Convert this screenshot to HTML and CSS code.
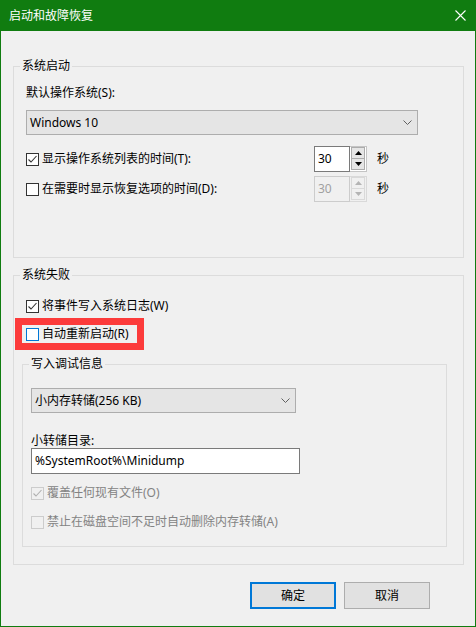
FILE: index.html
```html
<!DOCTYPE html>
<html lang="zh-CN">
<head>
<meta charset="utf-8">
<title>启动和故障恢复</title>
<link rel="stylesheet" href="styles.css">
</head>
<body>
<div class="window">
  <div class="titlebar">
    <span class="title">启动和故障恢复</span>
    <svg class="close" width="11" height="11" viewBox="0 0 11 11"><path d="M0.5 0.5 L10.5 10.5 M10.5 0.5 L0.5 10.5" stroke="#fff" stroke-width="1.1" fill="none"/></svg>
  </div>
  <div class="content">
    <fieldset class="group g1">
      <legend>系统启动</legend>
      <div class="gbody">
        <div class="label">默认操作系统(S):</div>
        <div class="combo w-os">
          <span>Windows 10</span>
          <svg class="chev" width="9" height="5" viewBox="0 0 9 5"><path d="M0.5 0.5 L4.5 4.5 L8.5 0.5" stroke="#606060" fill="none"/></svg>
        </div>
        <div class="row r-first">
          <div class="check wlabel"><span class="cb"><svg width="11" height="11" viewBox="0 0 11 11"><path d="M1.5 5.5 L4 8 L9.5 2" stroke="#333" stroke-width="1.1" fill="none"/></svg></span><span>显示操作系统列表的时间(T):</span></div>
          <div class="spin">
            <div class="field">30</div>
            <div class="btns">
              <div class="sbtn"><svg width="7" height="4" viewBox="0 0 7 4"><path d="M0 4 L3.5 0 L7 4 Z" fill="#000"/></svg></div>
              <div class="sbtn"><svg width="7" height="4" viewBox="0 0 7 4"><path d="M0 0 L3.5 4 L7 0 Z" fill="#000"/></svg></div>
            </div>
          </div>
          <span class="unit">秒</span>
        </div>
        <div class="row r-second">
          <div class="check wlabel"><span class="cb"></span><span>在需要时显示恢复选项的时间(D):</span></div>
          <div class="spin disabled">
            <div class="field">30</div>
            <div class="btns">
              <div class="sbtn"><svg width="7" height="4" viewBox="0 0 7 4"><path d="M0 4 L3.5 0 L7 4 Z" fill="#b4b4b4"/></svg></div>
              <div class="sbtn"><svg width="7" height="4" viewBox="0 0 7 4"><path d="M0 0 L3.5 4 L7 0 Z" fill="#b4b4b4"/></svg></div>
            </div>
          </div>
          <span class="unit">秒</span>
        </div>
      </div>
    </fieldset>

    <fieldset class="group g2">
      <legend>系统失败</legend>
      <div class="gbody">
        <div class="check line"><span class="cb"><svg width="11" height="11" viewBox="0 0 11 11"><path d="M1.5 5.5 L4 8 L9.5 2" stroke="#333" stroke-width="1.1" fill="none"/></svg></span><span>将事件写入系统日志(W)</span></div>
        <div class="highlight">
          <div class="check line"><span class="cb focus"></span><span>自动重新启动(R)</span></div>
        </div>
        <fieldset class="group g3">
          <legend>写入调试信息</legend>
          <div class="gbody">
            <div class="combo w-dump">
              <span>小内存转储(256 KB)</span>
              <svg class="chev" width="9" height="5" viewBox="0 0 9 5"><path d="M0.5 0.5 L4.5 4.5 L8.5 0.5" stroke="#606060" fill="none"/></svg>
            </div>
            <div class="label l-dir">小转储目录:</div>
            <div class="textbox">%SystemRoot%\Minidump</div>
            <div class="check line dis r-over"><span class="cb"><svg width="11" height="11" viewBox="0 0 11 11"><path d="M1.5 5.5 L4 8 L9.5 2" stroke="#b0b0b0" stroke-width="1.1" fill="none"/></svg></span><span>覆盖任何现有文件(O)</span></div>
            <div class="check line dis r-disable"><span class="cb"></span><span>禁止在磁盘空间不足时自动删除内存转储(A)</span></div>
          </div>
        </fieldset>
      </div>
    </fieldset>

    <div class="buttons">
      <div class="btn default">确定</div>
      <div class="btn">取消</div>
    </div>
  </div>
</div>
</body>
</html>
```
FILE: styles.css
```css
* { box-sizing: border-box; }
html, body { margin: 0; padding: 0; }
body {
  width: 476px;
  height: 627px;
  overflow: hidden;
  font-family: "Noto Sans", "Noto Sans CJK SC", sans-serif;
  font-size: 12px;
  line-height: 16px;
  color: #000;
  background: #f0f0f0;
}
.window {
  width: 476px;
  height: 627px;
  border: 1px solid #107c10;
  border-top: none;
  background: #f0f0f0;
  display: flex;
  flex-direction: column;
}
.titlebar {
  height: 31px;
  flex: none;
  background: #107c10;
  color: #fff;
  display: flex;
  align-items: center;
  padding-left: 8px;
}
.title { line-height: 16px; }
.close { margin-left: auto; margin-right: 9px; }
.content { padding-top: 27px; }

.group {
  margin: 0;
  padding: 0;
  border: 1px solid #dcdcdc;
  min-width: 0;
}
.group legend {
  margin-left: 6px;
  padding: 0 2px;
  line-height: 16px;
}
.g1 { margin-left: 12px; width: 451px; }
.g1 .gbody { padding: 11px 0 55px 12px; }
.g2 { margin-left: 12px; margin-top: 9px; width: 451px; }
.g2 .gbody { padding: 15px 0 17px 12px; }
.g3 { margin-left: -4px; margin-top: 6px; width: 425px; }
.g3 .gbody { padding: 16px 0 16px 8px; }

.label { line-height: 16px; }
.l-dir { line-height: 14px; margin-top: 21px; }

.combo {
  height: 25px;
  border: 1px solid #adadad;
  background: #e5e5e5;
  display: flex;
  align-items: center;
  justify-content: space-between;
  padding: 0 5px 0 3px;
}
.w-os { width: 392px; margin-top: 9px; }
.w-dump { width: 265px; }
.chev { flex: none; }

.row { display: flex; align-items: center; height: 26px; }
.r-first { margin-top: 11px; }
.r-second { margin-top: 4px; }
.wlabel { width: 288px; }

.check { display: flex; align-items: center; }
.check.line { height: 16px; }
.cb {
  width: 13px;
  height: 13px;
  flex: none;
  border: 1px solid #333;
  background: #fff;
  margin-right: 3px;
  display: flex;
  align-items: center;
  justify-content: center;
}
.cb.focus { border-color: #0078d7; }
.dis { color: #838383; }
.dis .cb { border-color: #cccccc; background: transparent; }
.r-over { margin-top: 11px; }
.r-disable { margin-top: 13px; }

.highlight {
  margin-top: 4px;
  margin-left: -11px;
  width: 129px;
  height: 32px;
  border: 7px solid #fc3b3b;
  padding-left: 4px;
  display: flex;
  align-items: center;
}

.spin { display: flex; height: 26px; }
.spin .field {
  width: 36px;
  height: 26px;
  border: 1px solid #7a7a7a;
  background: #fff;
  padding-left: 3px;
  display: flex;
  align-items: center;
}
.spin .btns {
  width: 17px;
  height: 26px;
  border: 1px solid #c4c4c4;
  border-left: none;
  background: #fff;
  padding: 0 1px 1px 1px;
  display: flex;
  flex-direction: column;
}
.sbtn {
  flex: 1;
  background: #e5e5e5;
  border: 1px solid #acacac;
  display: flex;
  align-items: center;
  justify-content: center;
}
.sbtn + .sbtn { border-top: none; }
.spin.disabled .field { background: #f0f0f0; border-color: #cccccc; color: #a0a0a0; }
.spin.disabled .btns { border-color: #d9d9d9; background: #f0f0f0; }
.spin.disabled .sbtn { background: #f0f0f0; border-color: #d9d9d9; }
.unit { margin-left: 10px; }

.textbox {
  width: 269px;
  height: 26px;
  border: 1px solid #7a7a7a;
  background: #fff;
  padding-left: 3px;
  display: flex;
  align-items: center;
}

.buttons {
  display: flex;
  justify-content: flex-end;
  gap: 8px;
  margin-top: 17px;
  padding-right: 45px;
}
.btn {
  width: 86px;
  height: 27px;
  background: #e1e1e1;
  border: 1px solid #adadad;
  display: flex;
  align-items: center;
  justify-content: center;
}
.btn.default { border: 2px solid #0078d7; }
```
